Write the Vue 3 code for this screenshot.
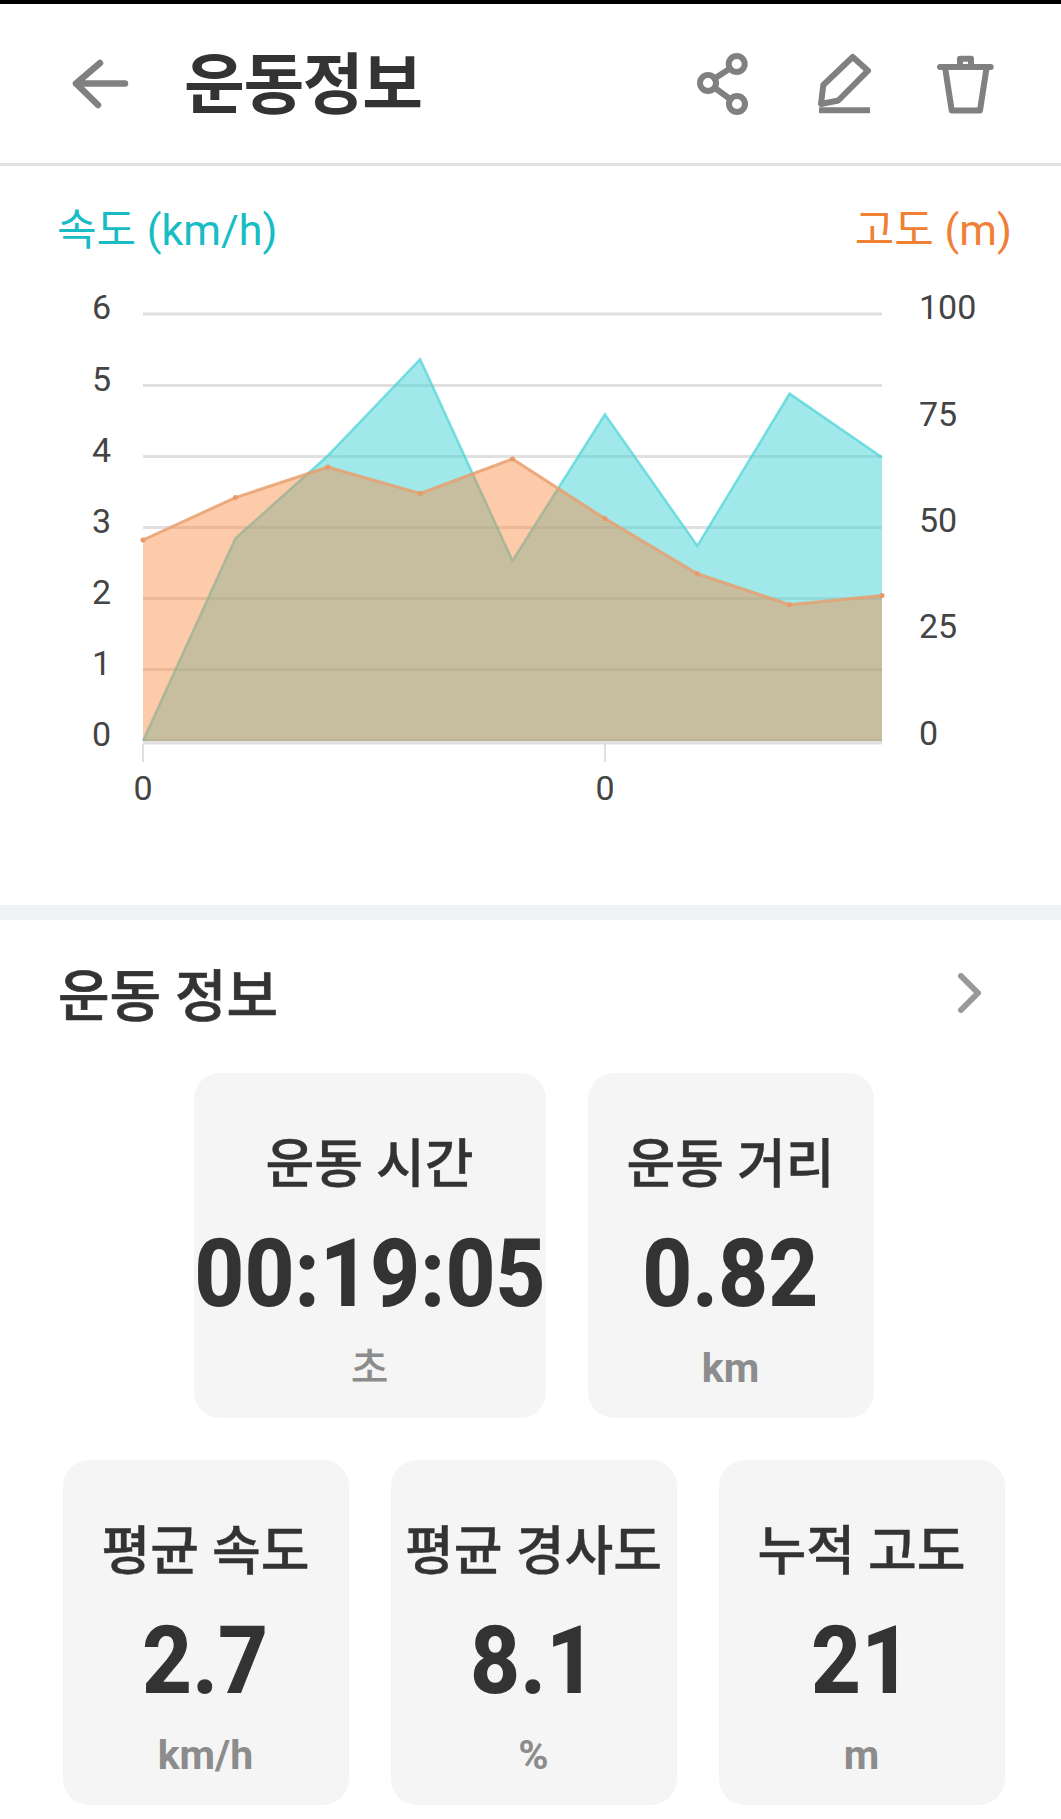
<template>
  <div class="page">
    <div class="status-bar"></div>
    <header class="header">
      <svg class="back-icon" width="70" height="71" viewBox="0 0 70 71">
        <path d="M36 15 L12 35.5 M12 35.5 L34 57 M12 35.5 H61" />
      </svg>
      <h1 class="header-title">운동정보</h1>
      <div class="header-actions">
        <svg class="icon" width="60" height="71" viewBox="0 0 60 71">
          <circle cx="44.7" cy="16" r="8" />
          <circle cx="16" cy="35" r="8" />
          <circle cx="45" cy="56" r="8" />
          <path d="M22.6 30.6 L38 20.5 M22.6 39.8 L38.4 51.2" />
        </svg>
        <svg class="icon" width="60" height="71" viewBox="0 0 60 71">
          <path d="M39.7 9 L55 22.7 L25.3 52.5 L8 56 L10.3 37 Z" />
          <path class="fill" d="M6 59.3 H57 V65.3 H6 Z" />
        </svg>
        <svg class="icon" width="60" height="71" viewBox="0 0 60 71">
          <path d="M6 19 H56.7 M26 19 V10.7 H37 V19 M11 19 L17.7 62.5 H46 L52.7 19" />
        </svg>
      </div>
    </header>

    <section class="chart-section">
      <div class="legend">
        <span class="legend-speed">속도 (km/h)</span>
        <span class="legend-alt">고도 (m)</span>
      </div>
      <svg class="chart" width="1061" height="560" :viewBox="`0 ${chartTop} 1061 560`">
        <line v-for="y in gridLines" :key="y" class="grid" x1="143" x2="882" :y1="y" :y2="y" />
        <line class="grid axis" x1="143" x2="882" y1="742.5" y2="742.5" />
        <line class="tick" x1="143" x2="143" y1="744" y2="762" />
        <line class="tick" x1="605" x2="605" y1="744" y2="762" />

        <polygon class="area-speed" :points="areaPoints(speed)" />
        <polyline class="line-speed" :points="linePoints(speed)" />
        <polygon class="area-alt" :points="areaPoints(altitude)" />
        <polyline class="line-alt" :points="linePoints(altitude)" />
        <circle v-for="(y, i) in altitude" :key="'d' + i" class="dot-alt" :cx="xs[i]" :cy="y" r="2.5" />

        <text v-for="(label, i) in leftLabels" :key="'l' + i" class="axis-text" x="111" text-anchor="end"
          :y="gridLines[i] + 5">{{ label }}</text>
        <text v-for="label in rightLabels" :key="'r' + label.text" class="axis-text" x="919" :y="label.y">
          {{ label.text }}
        </text>
        <text class="axis-text" x="143" y="800" text-anchor="middle">0</text>
        <text class="axis-text" x="605" y="800" text-anchor="middle">0</text>
      </svg>
    </section>

    <div class="band"></div>

    <section class="info">
      <div class="info-head">
        <h2 class="info-title">운동 정보</h2>
        <svg class="chevron" width="24" height="40" viewBox="0 0 24 40">
          <path d="M4 3 L21 20 L4 37" />
        </svg>
      </div>
      <div v-for="(row, r) in rows" :key="r" class="card-row">
        <div v-for="card in row" :key="card.label" class="card" :class="{ wide: card.wide }">
          <div class="card-label">{{ card.label }}</div>
          <div class="card-value">{{ card.value }}</div>
          <div class="card-unit" :class="{ plain: card.plain }">{{ card.unit }}</div>
        </div>
      </div>
    </section>
  </div>
</template>

<script setup>
const chartTop = 270

const xs = [143, 235.4, 327.8, 420.2, 512.5, 604.9, 697.3, 789.6, 882]
const speed = [740.7, 538.3, 455.6, 359.2, 560.6, 414.3, 545.8, 393.6, 457.3]
const altitude = [540, 497.6, 467, 493.5, 459, 518.6, 573.7, 604.7, 595.4]

const gridLines = [314, 385.5, 456.5, 527.5, 598.5, 669.5, 740.5]
const leftLabels = ['6', '5', '4', '3', '2', '1', '0']
const rightLabels = [
  { text: '100', y: 319 },
  { text: '75', y: 426 },
  { text: '50', y: 532 },
  { text: '25', y: 638 },
  { text: '0', y: 745 }
]

const linePoints = (values) => values.map((y, i) => `${xs[i]},${y}`).join(' ')
const areaPoints = (values) => `143,741 ${linePoints(values)} 882,741`

const rows = [
  [
    { label: '운동 시간', value: '00:19:05', unit: '초', plain: true, wide: true },
    { label: '운동 거리', value: '0.82', unit: 'km' }
  ],
  [
    { label: '평균 속도', value: '2.7', unit: 'km/h' },
    { label: '평균 경사도', value: '8.1', unit: '%' },
    { label: '누적 고도', value: '21', unit: 'm' }
  ]
]
</script>

<style>
body {
  background: #fff;
}
</style>

<style scoped>
.page {
  width: 1061px;
  font-family: Roboto, "Noto Sans CJK KR", sans-serif;
  color: #333;
}

.status-bar {
  height: 4px;
  background: #000;
}

.header {
  display: flex;
  align-items: center;
  height: 159px;
  padding: 0 67px 0 64px;
  border-bottom: 3px solid #e2e2e2;
}

.back-icon path {
  fill: none;
  stroke: #808080;
  stroke-width: 6.5;
  stroke-linecap: round;
  stroke-linejoin: round;
}

.header-title {
  margin: 4px 0 0 50px;
  font-size: 66px;
  font-weight: 700;
  line-height: 1;
  letter-spacing: -1.3px;
}

.header-actions {
  display: flex;
  gap: 61px;
  margin-left: auto;
}

.icon path,
.icon circle {
  fill: none;
  stroke: #808080;
  stroke-width: 6;
  stroke-linecap: round;
  stroke-linejoin: round;
}

.icon .fill {
  fill: #808080;
  stroke: none;
}

.chart-section {
  height: 739px;
  overflow: hidden;
}

.legend {
  display: flex;
  justify-content: space-between;
  padding: 34px 49px 0 57px;
  font-size: 43px;
  line-height: 60px;
}

.legend-speed {
  color: #17bcc4;
}

.legend-alt {
  color: #f08035;
}

.chart {
  display: block;
  margin-top: 10px;
}

.grid {
  stroke: #e0e0e0;
  stroke-width: 3;
}

.axis {
  stroke-width: 4;
}

.tick {
  stroke: #e0e0e0;
  stroke-width: 2;
}

.area-speed {
  fill: #41d1d5;
  fill-opacity: 0.5;
}

.area-alt {
  fill: rgb(250, 131, 53);
  fill-opacity: 0.42;
}

.line-speed {
  fill: none;
  stroke: #41d1d5;
  stroke-opacity: 0.65;
  stroke-width: 2.5;
}

.line-alt {
  fill: none;
  stroke: #e8a070;
  stroke-opacity: 0.85;
  stroke-width: 3;
}

.dot-alt {
  fill: #e59a68;
}

.axis-text {
  fill: #444;
  font-size: 34px;
}

.band {
  height: 15px;
  background: #f1f2f4;
}

.info {
  padding: 0 58px;
}

.info-head {
  display: flex;
  align-items: center;
  justify-content: space-between;
  height: 153px;
  padding-right: 22px;
}

.info-title {
  margin: 0;
  font-size: 56px;
  font-weight: 500;
  line-height: 1;
  -webkit-text-stroke: 0.7px #333;
}

.chevron {
  margin-top: -8px;
}

.chevron path {
  fill: none;
  stroke: #999;
  stroke-width: 6;
  stroke-linecap: round;
  stroke-linejoin: round;
}

.card-row {
  display: flex;
  justify-content: center;
  gap: 42px;
  margin: 0 -13px 42px -7px;
}

.card {
  box-sizing: border-box;
  display: flex;
  flex-direction: column;
  align-items: center;
  width: 286px;
  height: 345px;
  padding-top: 60px;
  border-radius: 26px;
  background: #f5f5f5;
}

.card.wide {
  width: 352px;
}

.card-label {
  font-size: 53px;
  font-weight: 500;
  line-height: 64px;
  white-space: nowrap;
  -webkit-text-stroke: 0.4px #333;
}

.card-value {
  margin-top: 27px;
  font-size: 94px;
  font-weight: 800;
  line-height: 100px;
  transform: scaleX(0.925);
}

.card-unit {
  margin-top: 19px;
  font-size: 41px;
  font-weight: 700;
  line-height: 50px;
  color: #8c8c8c;
}

.card-unit.plain {
  font-weight: 500;
}
</style>
